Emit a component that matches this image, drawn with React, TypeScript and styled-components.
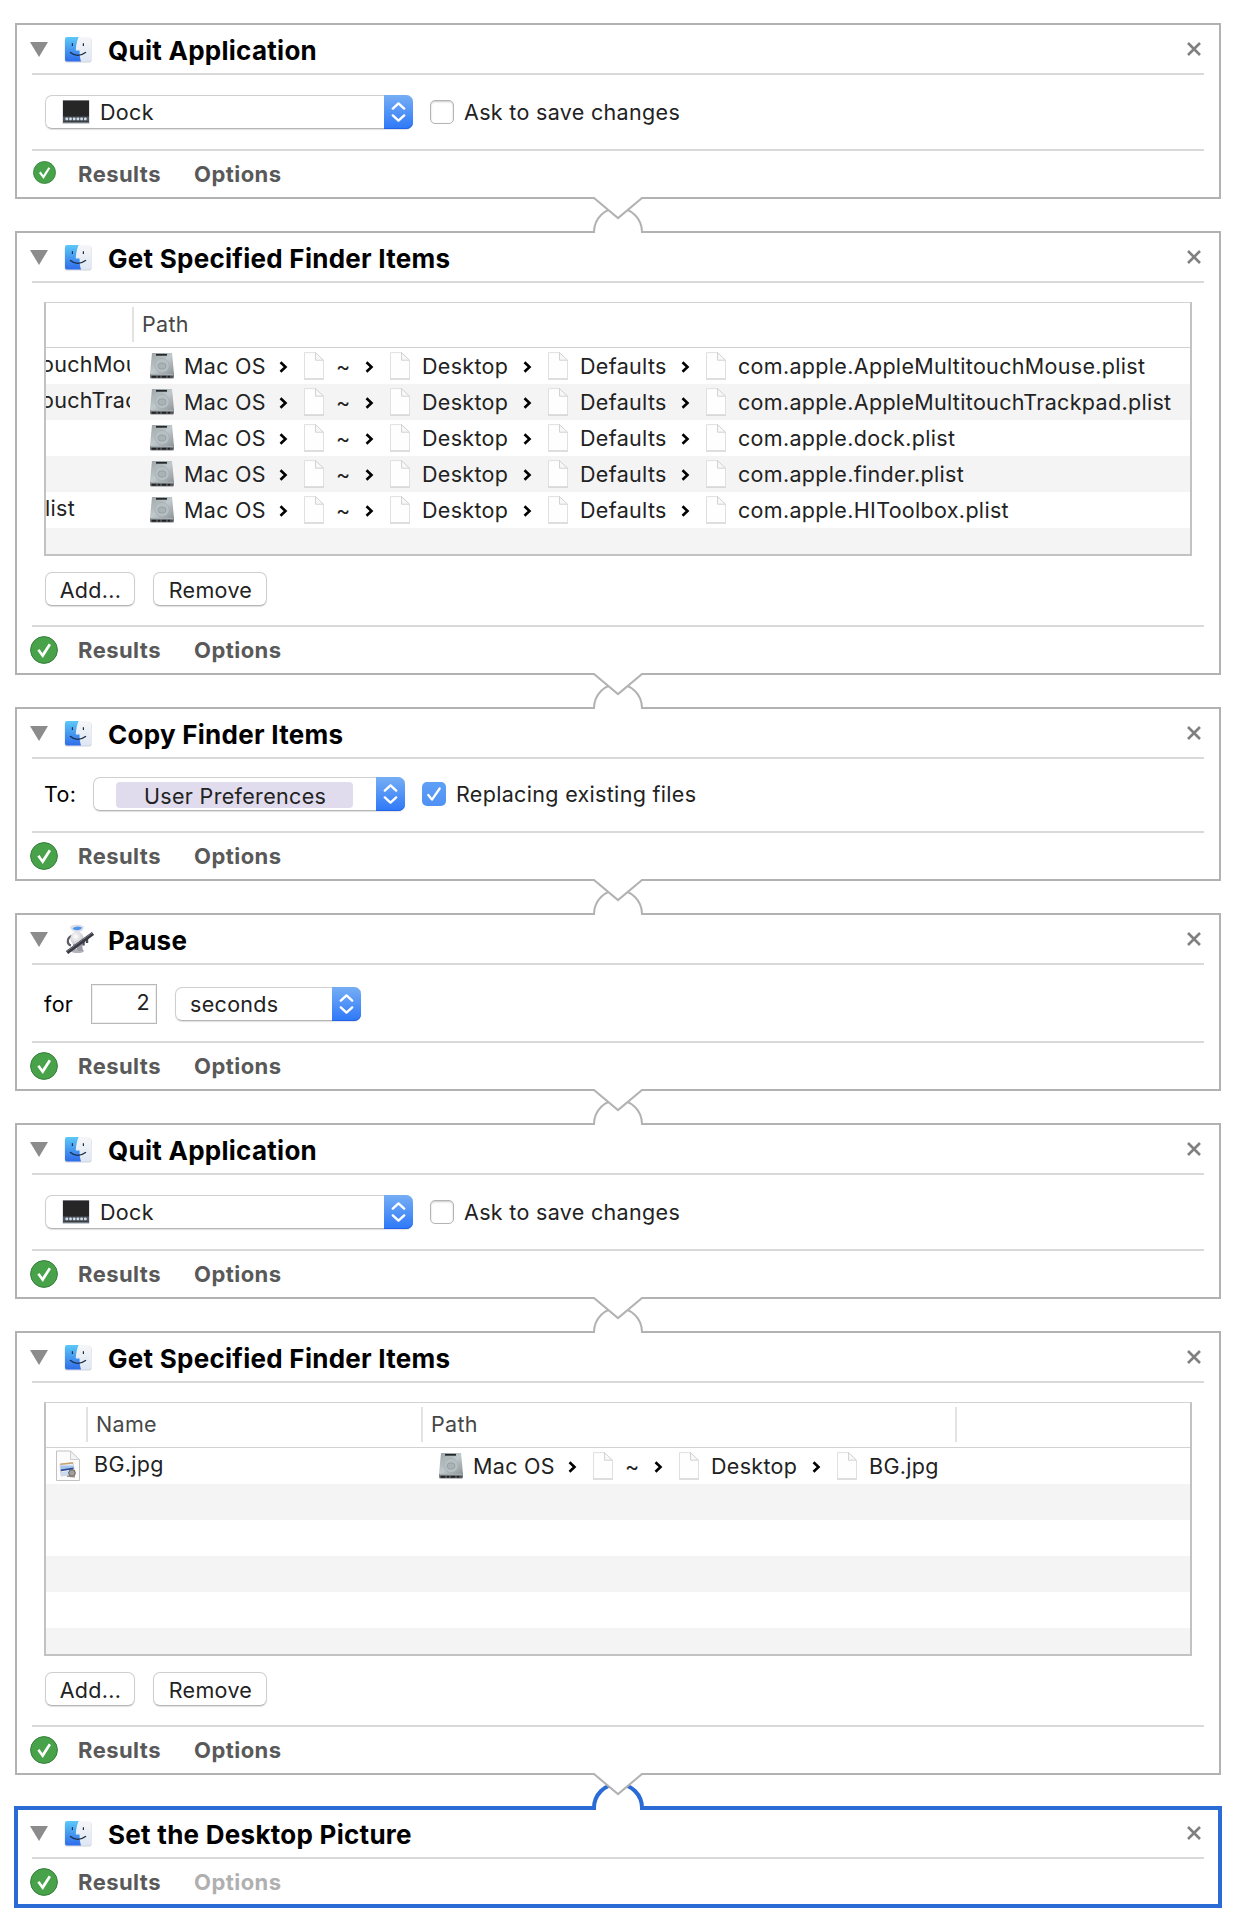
import React from "react";
import styled, { createGlobalStyle, css } from "styled-components";

const GlobalStyle = createGlobalStyle`
  * { box-sizing: border-box; }
  body {
    margin: 0;
    background: #fff;
    font-family: Inter, "Liberation Sans", sans-serif;
    font-size: 21.5px;
    line-height: 26px;
    letter-spacing: 0.32px;
    color: #222;
  }
`;

const Workflow = styled.main`
  width: 1236px;
  height: 1930px;
  padding: 23px 15px 0;
  display: flex;
  flex-direction: column;
  gap: 32px;
`;

const Card = styled.section<{ $selected?: boolean }>`
  position: relative;
  border: 2px solid #b2b2b2;
  background: #fff;
  ${(p) =>
    p.$selected &&
    css`
      border-color: #2a6bd6;
      box-shadow: 0 0 0 1px #2a6bd6, inset 0 0 0 1px #2a6bd6;
    `}
`;

const Outlet = styled.svg`
  position: absolute;
  left: 575px;
  top: 100%;
  margin-top: -2px;
  z-index: 2;
  display: block;
`;

const Inlet = styled.svg`
  position: absolute;
  left: 571px;
  top: -27px;
  z-index: 1;
  display: block;
`;

const Header = styled.header`
  height: 50px;
  margin: 0 15px;
  padding-top: 2px;
  border-bottom: 2px solid #d9d9d9;
  display: flex;
  align-items: center;
`;

const Disclosure = styled.svg`
  margin: -1px 16px 0 -2px;
  flex: none;
`;

const ActionIcon = styled.svg<{ $overhang?: number }>`
  margin: -3px ${(p) => -(p.$overhang ?? 0)}px 0 0;
  flex: none;
`;

const Title = styled.h2`
  margin: 2px 0 0;
  padding-left: 16px;
  flex: 1;
  font-size: 26px;
  line-height: 30px;
  font-weight: 700;
  letter-spacing: 0.27px;
  color: #000;
  white-space: nowrap;
`;

const Close = styled.svg`
  margin: -2px 3px 0 0;
  flex: none;
`;

const Body = styled.div<{ $height: number; $top?: number; $bottom?: number }>`
  height: ${(p) => p.$height}px;
  margin: 0 15px;
  padding: ${(p) => p.$top ?? 0}px 12px ${(p) => p.$bottom ?? 0}px 13px;
  border-bottom: 2px solid #d9d9d9;
  display: flex;
  align-items: center;
`;

const StackBody = styled(Body)`
  flex-direction: column;
  align-items: stretch;
`;

const Footer = styled.footer`
  height: 46px;
  padding-left: 13px;
  display: flex;
  align-items: center;
`;

const StatusSlot = styled.span<{ $small?: boolean }>`
  width: 48px;
  display: flex;
  padding-left: ${(p) => (p.$small ? 3 : 0)}px;
  margin-top: ${(p) => (p.$small ? -3 : -1)}px;
`;

const FooterTab = styled.span<{ $dim?: boolean; $width?: number }>`
  width: ${(p) => (p.$width ? `${p.$width}px` : "auto")};
  font-size: 22px;
  font-weight: 700;
  letter-spacing: 0.45px;
  color: ${(p) => (p.$dim ? "#b0b0b0" : "#595959")};
`;

const Popup = styled.div<{ $width: number; $indent: number }>`
  width: ${(p) => p.$width}px;
  height: 34px;
  padding-left: ${(p) => p.$indent}px;
  border: 1px solid #cfcfcf;
  border-bottom-color: #b5b5b5;
  border-right: 0;
  border-radius: 7px;
  box-shadow: 0 1px 1px rgba(0, 0, 0, 0.12);
  display: flex;
  align-items: center;
  flex: none;
`;

const PopupText = styled.span`
  flex: 1;
  white-space: nowrap;
`;

const PopupCap = styled.span`
  width: 29px;
  height: 34px;
  margin: -1px 0;
  background: linear-gradient(#76aef5, #2e78f8);
  box-shadow: inset 0 -1px 0 #2163ea;
  border-radius: 0 7px 7px 0;
  display: flex;
  align-items: center;
  justify-content: center;
  flex: none;
`;

const Token = styled.span`
  width: 237px;
  height: 26px;
  margin: 2px auto 0 0;
  padding: 1px 0 0 28px;
  border-radius: 4px;
  background: #e0dcee;
  white-space: nowrap;
`;

const CheckBox = styled.span<{ $checked?: boolean; $gap: number }>`
  width: 24px;
  height: 24px;
  margin: 0 10px 0 ${(p) => p.$gap}px;
  border-radius: 5px;
  border: ${(p) => (p.$checked ? "0" : "1px solid #b4b4b4")};
  background: ${(p) => (p.$checked ? "linear-gradient(#5fa0f6, #4f90f5)" : "#fff")};
  box-shadow: ${(p) => (p.$checked ? "none" : "inset 0 1px 2px rgba(0, 0, 0, 0.22)")};
  display: flex;
  align-items: center;
  justify-content: center;
  flex: none;
`;

const Label = styled.span<{ $width?: number }>`
  width: ${(p) => (p.$width ? `${p.$width}px` : "auto")};
  white-space: nowrap;
`;

const FieldLabel = styled(Label)`
  margin-left: -1px;
  color: #000;
`;

const NumberField = styled.span`
  width: 66px;
  height: 40px;
  margin: -1px 18px 0 0;
  padding: 0 6px 4px 0;
  border: 1px solid #b8b8b8;
  box-shadow: inset 0 0 0 1px #f0f0f0;
  display: flex;
  align-items: center;
  justify-content: flex-end;
`;

const Table = styled.div`
  width: 1148px;
  height: 254px;
  margin-left: -1px;
  flex: none;
  border: 2px solid #c2c2c2;
  border-top: 1px solid #d2d2d2;
  display: flex;
  flex-direction: column;
  overflow: hidden;
`;

const TableHead = styled.div`
  height: 45px;
  flex: none;
  border-bottom: 1px solid #d2d2d2;
  display: flex;
  align-items: center;
`;

const HeadCell = styled.div<{ $width: number }>`
  width: ${(p) => p.$width}px;
  height: 35px;
  margin-bottom: 1px;
  padding: 0 0 2px 8px;
  border-right: 2px solid #e2e2e2;
  color: #474747;
  display: flex;
  align-items: center;
  &:last-child {
    border-right: 0;
  }
`;

const Row = styled.div<{ $shaded?: boolean }>`
  height: 36px;
  flex: none;
  background: ${(p) => (p.$shaded ? "#f4f4f4" : "#fff")};
  display: flex;
  align-items: center;
`;

const NameCell = styled.div<{ $width: number; $indent: number; $gap?: number }>`
  width: ${(p) => p.$width}px;
  margin: -5px ${(p) => p.$gap ?? 0}px 0 0;
  text-indent: ${(p) => p.$indent}px;
  overflow: hidden;
  white-space: nowrap;
  flex: none;
`;

const IconCell = styled.div`
  width: 40px;
  padding-left: 9px;
  display: flex;
`;

const Segment = styled.div<{ $width?: number; $textAt: number }>`
  width: ${(p) => (p.$width ? `${p.$width}px` : "auto")};
  display: flex;
  align-items: center;
  white-space: nowrap;
  flex: none;
  & > :first-child {
    margin-right: ${(p) => p.$textAt}px;
  }
`;

const Chevron = styled.svg`
  margin: 2px 16px 0 auto;
  flex: none;
`;

const Buttons = styled.div`
  margin-top: 16px;
  display: flex;
  gap: 18px;
`;

const Button = styled.button<{ $width: number }>`
  width: ${(p) => p.$width}px;
  height: 34px;
  padding: 2px 0 0 1px;
  border: 1px solid #cfcfcf;
  border-bottom-color: #b5b5b5;
  border-radius: 7px;
  background: #fff;
  box-shadow: 0 1px 1px rgba(0, 0, 0, 0.12);
  font: inherit;
  letter-spacing: inherit;
  color: #222;
`;

const FinderIcon = () => (
  <ActionIcon width="28" height="28" viewBox="0 0 28 28">
    <defs>
      <linearGradient id="finderBlue" x1="0" y1="0" x2="0" y2="1">
        <stop offset="0" stopColor="#5cc8f8" />
        <stop offset="1" stopColor="#2f6cea" />
      </linearGradient>
      <linearGradient id="finderPale" x1="0" y1="0" x2="0" y2="1">
        <stop offset="0" stopColor="#f6f6f8" />
        <stop offset="1" stopColor="#dde7f3" />
      </linearGradient>
    </defs>
    <rect x=".7" y="3" width="26.800" height="24.400" rx="2" fill="#c4c8cf" opacity=".8" />
    <rect x="1" y="2" width="26" height="24.500" rx="2" fill="url(#finderPale)" />
    <path d="M3 2H14.600C12.800 6.500 12 10.500 11.800 15.600H15.600C15.500 19.500 15.900 23 17 26.500H3Q1 26.500 1 24.500V4Q1 2 3 2Z" fill="url(#finderBlue)" />
    <path d="M8.400 8.300V11M19.400 8.300V11" stroke="#1d2b45" strokeWidth="1.200" />
    <path d="M6 17.200Q13.500 23.400 22 17.200" fill="none" stroke="#1d2b45" strokeWidth="1.300" />
  </ActionIcon>
);

const AutomatorIcon = () => (
  <ActionIcon width="30" height="30" viewBox="0 0 30 30" $overhang={2}>
    <defs>
      <radialGradient id="robotShell" cx=".4" cy=".35" r=".75">
        <stop offset="0" stopColor="#ffffff" />
        <stop offset="1" stopColor="#b9b9c2" />
      </radialGradient>
    </defs>
    <path d="M8.500 11.500Q3.500 13 3.800 18Q4.500 21 7 21.500" fill="none" stroke="#5b5b66" strokeWidth="2.200" />
    <ellipse cx="13.500" cy="27" rx="6.500" ry="2" fill="#b2b2ba" />
    <ellipse cx="13" cy="14.500" rx="6.600" ry="6.800" fill="url(#robotShell)" />
    <path d="M9 20H18L19 27H14L12.500 24L10 26.500Z" fill="#9c9ca6" />
    <path d="M6 2.500Q13 -1.500 20 2.500Q19.500 8 13 8Q6.800 8 6 2.500Z" fill="#dfe0e5" />
    <path d="M8.500 4.200Q13 1 18 3.600Q17 6.300 13 6.300Q9.500 6.300 8.500 4.200Z" fill="#4c95f0" />
    <path d="M23 13V19M19.500 16V21.500" stroke="#4a4a55" strokeWidth="2.400" />
    <path d="M3 28.500L29 9.500" stroke="#393944" strokeWidth="3.800" />
    <path d="M3 27.200L28 9" stroke="#858591" strokeWidth=".8" />
  </ActionIcon>
);

const DockGlyph = styled.svg`
  margin-right: 10px;
  flex: none;
`;

const DockIcon = () => (
  <DockGlyph width="28" height="26" viewBox="0 0 28 26">
    <rect x=".5" y="1" width="27" height="24" fill="#c4ccd4" />
    <rect x="1" y="1.500" width="26" height="22" fill="#262626" />
    <rect x="1" y="17.500" width="26" height="5" fill="#4f565e" />
    {[3.5, 7.2, 10.9, 14.6, 18.3, 22].map((x) => (
      <rect key={x} x={x} y="18.500" width="2.600" height="2.800" rx=".8" fill="#cfdbe6" />
    ))}
  </DockGlyph>
);

const DriveIcon = () => (
  <svg width="26" height="28" viewBox="0 0 26 28">
    <defs>
      <linearGradient id="driveMetal" x1="0" y1="0" x2="1" y2="1">
        <stop offset="0" stopColor="#98a1a4" />
        <stop offset=".5" stopColor="#c0c9cc" />
        <stop offset="1" stopColor="#8d9598" />
      </linearGradient>
    </defs>
    <path d="M1 21H25V25Q25 26.500 23.500 26.500H2.500Q1 26.500 1 25Z" fill="#777d80" />
    <path d="M3 1H23L25 22H1Z" fill="url(#driveMetal)" />
    <path d="M7 2.800H18" stroke="#22282a" strokeWidth="1.800" />
    <circle cx="13" cy="13.500" r="7.200" fill="#b6bfc2" stroke="#a2abae" strokeWidth=".7" />
    <ellipse cx="13" cy="14" rx="4" ry="3.200" fill="#a9b2b5" stroke="#8f989b" strokeWidth=".7" />
    <path d="M1.500 22.700H24.500" stroke="#b5bbbd" />
    <path d="M2.500 24.700H23.500" stroke="#222" strokeWidth="2" strokeDasharray="5 1 3 1" />
  </svg>
);

const FileIcon = () => (
  <svg width="20" height="28" viewBox="0 0 20 28">
    <path d="M0 26.900H20" stroke="#c4c4c4" strokeWidth="1.300" />
    <path d="M.5 .6H11.500L19.500 8.600V26.500H.5Z" fill="#fefefe" stroke="#dcdcdc" strokeWidth=".9" />
    <path d="M11.500 .6V8.200H19.500Z" fill="#f8f8f8" stroke="#cecece" strokeWidth=".9" />
  </svg>
);

const PictureFileIcon = () => (
  <svg width="26" height="32" viewBox="0 0 26 32">
    <path d="M1.500 1H15.500L24.500 10V30.500H1.500Z" fill="#fcfcfc" stroke="#c2c2c2" />
    <path d="M15.500 1V9.500H24.500Z" fill="#f3f3f3" stroke="#cfcfcf" />
    <path d="M5 14L18 12.500L20 24L6 26Z" fill="#eef2f8" stroke="#b9b9b9" strokeWidth=".6" />
    <path d="M5.500 14.200L18 13" stroke="#c9a468" strokeWidth="1.600" />
    <path d="M5.500 15.500H18.500V19.500H5.700Z" fill="#a4c4f0" />
    <path d="M5.600 19.600L18.500 17.500V19.300L6 21.200Z" fill="#2c4a94" />
    <path d="M6 22L14 21L15 25L6.500 25.500Z" fill="#c9daf2" />
    <circle cx="17" cy="23" r="3.300" fill="#a3a09a" stroke="#4d4d4d" strokeWidth=".8" />
    <path d="M12 26.200L20 26.800" stroke="#8b8378" strokeWidth="1.200" />
  </svg>
);

const StatusIcon = ({ size }: { size: number }) => (
  <svg width={size} height={size} viewBox="0 0 28 28">
    <circle cx="14" cy="14" r="13.400" fill="#48a24a" stroke="#357f3b" strokeWidth="1" />
    <path d="M7.300 14.600L9.500 12.900L12.400 17.300L18.800 7.600L21 8.900L12.800 22Z" fill="#fff" />
  </svg>
);

const PopupArrows = () => (
  <PopupCap>
    <svg width="15" height="22" viewBox="0 0 15 22">
      <path d="M1.800 7.600L7.500 2.400L13.200 7.600M1.800 14.400L7.500 19.600L13.200 14.400" fill="none" stroke="#fff" strokeWidth="2.400" strokeLinecap="round" strokeLinejoin="round" />
    </svg>
  </PopupCap>
);

type ActionProps = {
  title: string;
  icon?: "finder" | "automator";
  selected?: boolean;
  first?: boolean;
  children?: React.ReactNode;
};

const Action = ({ title, icon = "finder", selected, first, children }: ActionProps) => (
  <Card $selected={selected}>
    {!first && (
      <Inlet width="60" height="31" viewBox="0 0 60 31">
        <path d="M6 25H54V30H6Z" fill="#fff" />
        <path
          d={selected ? "M6 28V26A24 24 0 0 1 54 26V28" : "M6 27V26A24 24 0 0 1 54 26V27"}
          fill="#fff"
          stroke={selected ? "#2a6bd6" : "#b2b2b2"}
          strokeWidth={selected ? 4 : 2}
        />
      </Inlet>
    )}
    <Header>
      <Disclosure width="18" height="15" viewBox="0 0 18 15">
        <path d="M0 0H18L9 15Z" fill="#8c8c8c" />
      </Disclosure>
      {icon === "finder" ? <FinderIcon /> : <AutomatorIcon />}
      <Title>{title}</Title>
      <Close width="14" height="14" viewBox="0 0 14 14">
        <path d="M1 1L13 13M13 1L1 13" stroke="#808080" strokeWidth="2.600" />
      </Close>
    </Header>
    {children}
    <Footer>
      <StatusSlot $small={first}>
        <StatusIcon size={first ? 23 : 28} />
      </StatusSlot>
      <FooterTab $width={116}>Results</FooterTab>
      <FooterTab $dim={selected}>Options</FooterTab>
    </Footer>
    {!selected && (
      <Outlet width="52" height="26" viewBox="0 0 52 26">
        <path d="M2 0H50V3L26 23L2 3Z" fill="#fff" />
        <path d="M0 3H2L26 23.100L50 3H52" fill="none" stroke="#b2b2b2" strokeWidth="2" />
      </Outlet>
    )}
  </Card>
);

const QuitBody = () => (
  <Body $height={76}>
    <Popup $width={368} $indent={16}>
      <DockIcon />
      <PopupText>Dock</PopupText>
      <PopupArrows />
    </Popup>
    <CheckBox $gap={17} />
    <Label>Ask to save changes</Label>
  </Body>
);

const Separator = () => (
  <Chevron width="9" height="12" viewBox="0 0 9 12">
    <path d="M1.500 1.300L6.500 6L1.500 10.700" fill="none" stroke="#000" strokeWidth="2.600" />
  </Chevron>
);

const segmentWidths: Record<string, number> = { "Mac OS": 155, "~": 86, Desktop: 158, Defaults: 158 };

const Path = ({ parts }: { parts: string[] }) => (
  <>
    {parts.map((part, i) => {
      const last = i === parts.length - 1;
      return (
        <Segment key={part} $width={last ? undefined : segmentWidths[part]} $textAt={i === 0 ? 9 : 12}>
          {i === 0 ? <DriveIcon /> : <FileIcon />}
          <span>{part}</span>
          {!last && <Separator />}
        </Segment>
      );
    })}
  </>
);

const files = [
  { name: "ouchMouse.plist", indent: -5, file: "com.apple.AppleMultitouchMouse.plist" },
  { name: "ouchTrackpad.plist", indent: -5, file: "com.apple.AppleMultitouchTrackpad.plist" },
  { name: "", indent: 0, file: "com.apple.dock.plist" },
  { name: "", indent: 0, file: "com.apple.finder.plist" },
  { name: "list", indent: -1, file: "com.apple.HIToolbox.plist" },
];

const TableButtons = () => (
  <Buttons>
    <Button $width={90}>Add...</Button>
    <Button $width={114}>Remove</Button>
  </Buttons>
);

export default function App() {
  return (
    <>
      <GlobalStyle />
      <Workflow>
        <Action title="Quit Application" first>
          <QuitBody />
        </Action>
        <Action title="Get Specified Finder Items">
          <StackBody $height={344} $top={19}>
            <Table>
              <TableHead>
                <HeadCell $width={88} />
                <HeadCell $width={300}>Path</HeadCell>
              </TableHead>
              {files.map((f, i) => (
                <Row key={f.file} $shaded={i % 2 === 1}>
                  <NameCell $width={84} $indent={f.indent} $gap={19}>{f.name}</NameCell>
                  <Path parts={["Mac OS", "~", "Desktop", "Defaults", f.file]} />
                </Row>
              ))}
              <Row $shaded />
            </Table>
            <TableButtons />
          </StackBody>
        </Action>
        <Action title="Copy Finder Items">
          <Body $height={74} $bottom={2}>
            <FieldLabel $width={49}>To:</FieldLabel>
            <Popup $width={312} $indent={22}>
              <Token>User Preferences</Token>
              <PopupArrows />
            </Popup>
            <CheckBox $gap={17} $checked>
              <svg width="24" height="24" viewBox="0 0 24 24">
                <path d="M6.300 13L10 17.600L17.700 6.500" fill="none" stroke="#fff" strokeWidth="2.300" strokeLinecap="round" strokeLinejoin="round" />
              </svg>
            </CheckBox>
            <Label>Replacing existing files</Label>
          </Body>
        </Action>
        <Action title="Pause" icon="automator">
          <Body $height={78} $top={2}>
            <FieldLabel $width={47}>for</FieldLabel>
            <NumberField>2</NumberField>
            <Popup $width={186} $indent={14}>
              <PopupText>seconds</PopupText>
              <PopupArrows />
            </Popup>
          </Body>
        </Action>
        <Action title="Quit Application">
          <QuitBody />
        </Action>
        <Action title="Get Specified Finder Items">
          <StackBody $height={344} $top={19}>
            <Table>
              <TableHead>
                <HeadCell $width={42} />
                <HeadCell $width={335}>Name</HeadCell>
                <HeadCell $width={534}>Path</HeadCell>
                <HeadCell $width={180} />
              </TableHead>
              <Row>
                <IconCell>
                  <PictureFileIcon />
                </IconCell>
                <NameCell $width={352} $indent={8}>BG.jpg</NameCell>
                <Path parts={["Mac OS", "~", "Desktop", "BG.jpg"]} />
              </Row>
              <Row $shaded />
              <Row />
              <Row $shaded />
              <Row />
              <Row $shaded />
            </Table>
            <TableButtons />
          </StackBody>
        </Action>
        <Action title="Set the Desktop Picture" selected />
      </Workflow>
    </>
  );
}
